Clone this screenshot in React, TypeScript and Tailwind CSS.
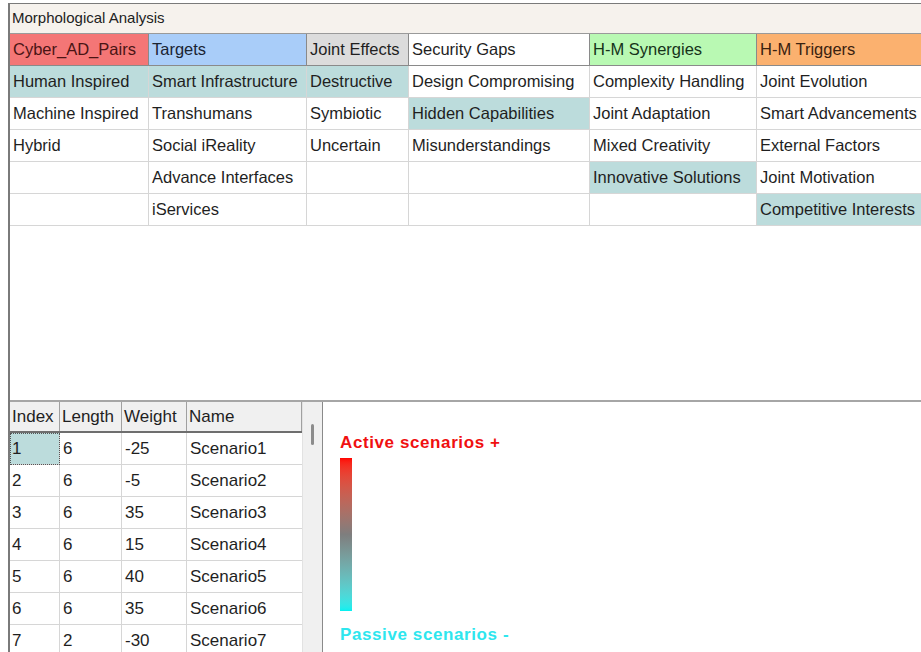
import React from "react";

type Column = {
  title: string;
  width: string;
  headerClass: string;
  items: string[];
  selected: number[];
};

const columns: Column[] = [
  {
    title: "Cyber_AD_Pairs",
    width: "w-[139px]",
    headerClass: "bg-[#f47676] text-[#4a1414]",
    items: ["Human Inspired", "Machine Inspired", "Hybrid", "", ""],
    selected: [0],
  },
  {
    title: "Targets",
    width: "w-[158px]",
    headerClass: "bg-[#a9cdf9] text-[#1a2433]",
    items: ["Smart Infrastructure", "Transhumans", "Social iReality", "Advance Interfaces", "iServices"],
    selected: [0],
  },
  {
    title: "Joint Effects",
    width: "w-[102px]",
    headerClass: "bg-[#dcdcdc] text-[#1f1f1f]",
    items: ["Destructive", "Symbiotic", "Uncertain", "", ""],
    selected: [0],
  },
  {
    title: "Security Gaps",
    width: "w-[181px]",
    headerClass: "bg-white text-[#1f1f1f]",
    items: ["Design Compromising", "Hidden Capabilities", "Misunderstandings", "", ""],
    selected: [1],
  },
  {
    title: "H-M Synergies",
    width: "w-[167px]",
    headerClass: "bg-[#b9f9b3] text-[#16331a]",
    items: ["Complexity Handling", "Joint Adaptation", "Mixed Creativity", "Innovative Solutions", ""],
    selected: [3],
  },
  {
    title: "H-M Triggers",
    width: "w-[180px]",
    headerClass: "bg-[#fbb16f] text-[#3a2210]",
    items: ["Joint Evolution", "Smart Advancements", "External Factors", "Joint Motivation", "Competitive Interests"],
    selected: [4],
  },
];

const scenarios = [
  { index: 1, length: 6, weight: -25 },
  { index: 2, length: 6, weight: -5 },
  { index: 3, length: 6, weight: 35 },
  { index: 4, length: 6, weight: 15 },
  { index: 5, length: 6, weight: 40 },
  { index: 6, length: 6, weight: 35 },
  { index: 7, length: 2, weight: -30 },
];

const font = { fontFamily: '"Liberation Sans", Arial, sans-serif' };

function MorphGrid() {
  return (
    <div className="flex shrink-0 text-[16.5px]">
      {columns.map((col) => (
        <div key={col.title} className={`${col.width} shrink-0 flex flex-col`}>
          <div
            className={`h-[32px] flex items-center pl-[3px] whitespace-nowrap overflow-hidden border-r border-b border-[#8a8a8a] ${col.headerClass}`}
          >
            {col.title}
          </div>
          {col.items.map((item, i) => (
            <div
              key={i}
              className={`h-[32px] flex items-center pl-[3px] whitespace-nowrap overflow-hidden border-r border-b border-[#d6d6d6] text-[#1f1f1f] ${
                col.selected.includes(i) ? "bg-[#bcdcdc]" : "bg-white"
              }`}
            >
              {item}
            </div>
          ))}
        </div>
      ))}
    </div>
  );
}

function ScenarioGrid() {
  const cols = ["w-[50px]", "w-[62px]", "w-[65px]", "w-[115px]"];
  const head = ["Index", "Length", "Weight", "Name"];
  return (
    <div className="flex shrink-0 border-r border-[#8a8a8a] text-[17px]">
      <div className="flex flex-col">
        <div className="flex shrink-0 h-[31px] bg-[#f0f0f0] border-b-2 border-[#6e6e6e]">
          {head.map((h, i) => (
            <div
              key={h}
              className={`${cols[i]} flex items-center pl-[2px] border-r border-[#a0a0a0] text-[#1f1f1f]`}
            >
              {h}
            </div>
          ))}
        </div>
        {scenarios.map((s) => (
          <div key={s.index} className="flex shrink-0 h-[32px] bg-white">
            <div
              className={`${cols[0]} flex items-center pl-[2px] border-r border-b border-[#d6d6d6] ${
                s.index === 1 ? "bg-[#bcdcdc] outline outline-1 outline-dotted outline-[#555] -outline-offset-1" : ""
              }`}
            >
              {s.index}
            </div>
            <div className={`${cols[1]} flex items-center pl-[3px] border-r border-b border-[#d6d6d6]`}>{s.length}</div>
            <div className={`${cols[2]} flex items-center pl-[3px] border-r border-b border-[#d6d6d6]`}>{s.weight}</div>
            <div className={`${cols[3]} flex items-center pl-[3px] border-b border-[#d6d6d6]`}>Scenario{s.index}</div>
          </div>
        ))}
      </div>
      {/* vertical scrollbar track */}
      <div className="w-[20px] bg-[#f0f0f0] border-l border-[#e2e2e2] flex justify-center pt-[22px]">
        <div className="w-[3px] h-[21px] bg-[#8c8c8c] rounded-sm" />
      </div>
    </div>
  );
}

function Legend() {
  return (
    <div className="flex-1 bg-white pl-[17px] pt-[32px] flex flex-col">
      <div className="text-[17px] font-bold text-[#f01010] leading-[18px] tracking-[0.6px]">Active scenarios +</div>
      <div className="mt-[6px] w-[12px] h-[153px] bg-gradient-to-b from-[#ff0000] via-[#7e7e7e] to-[#00f0f0]" />
      <div className="mt-[15px] text-[17px] font-bold text-[#2ee6ee] leading-[18px] tracking-[0.6px]">Passive scenarios -</div>
    </div>
  );
}

export default function App() {
  return (
    <div
      className="w-[921px] h-[652px] bg-white overflow-hidden pl-[8px] pt-[3px] text-[16px] text-[#1f1f1f]"
      style={font}
    >
      <div className="h-full flex flex-col border-l-2 border-t border-[#7a7a7a]">
        <div className="h-[30px] shrink-0 bg-[#f6f2ed] flex items-center pl-[2px] text-[15px] text-[#222] border-b border-[#9a9a9a]">
          Morphological Analysis
        </div>
        <MorphGrid />
        <div className="flex-1 min-h-0 bg-white border-b-2 border-[#a6a6a6]" />
        <div className="h-[250px] shrink-0 flex">
          <ScenarioGrid />
          <Legend />
        </div>
      </div>
    </div>
  );
}
